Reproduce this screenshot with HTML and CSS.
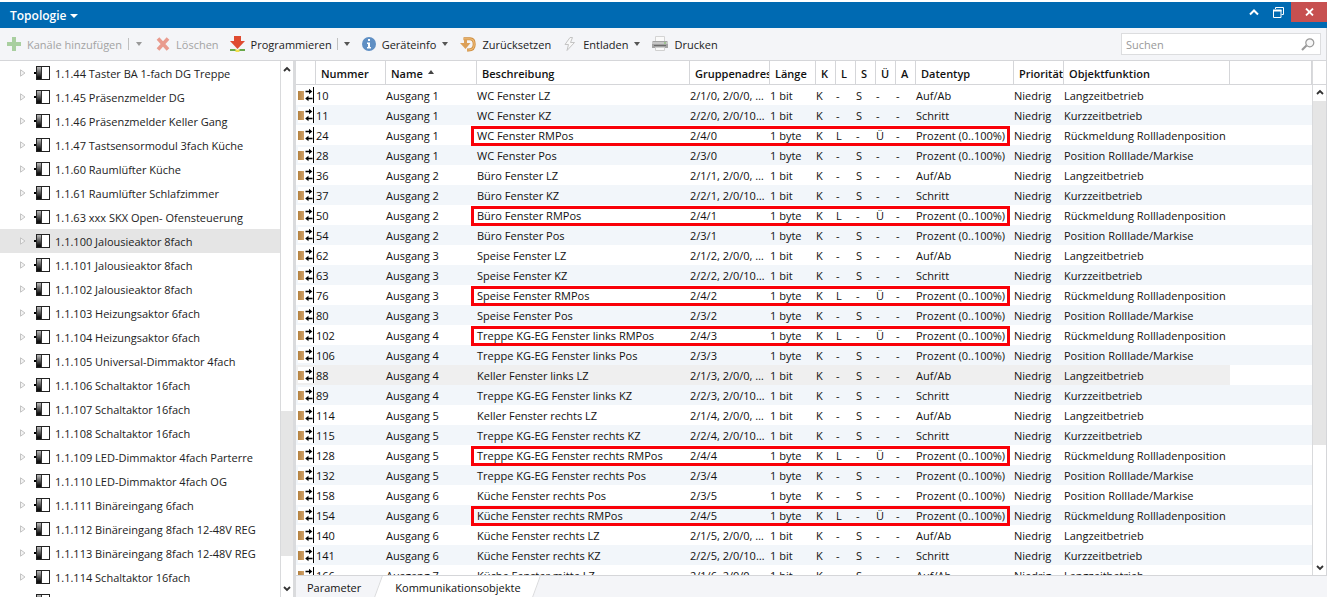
FILE: index.html
```html
<!DOCTYPE html>
<html lang="de">
<head>
<meta charset="utf-8">
<title>Topologie</title>
<link rel="stylesheet" href="styles.css">
</head>
<body>
<svg class="defs" aria-hidden="true">
  <defs>
    <linearGradient id="dev-fill" x1="0" y1="0" x2="0" y2="1"><stop offset="0" stop-color="#bbb"/><stop offset="0.85" stop-color="#111"/></linearGradient>
    <linearGradient id="obj-fill" x1="0" y1="0" x2="1" y2="0"><stop offset="0" stop-color="#b5823f"/><stop offset="1" stop-color="#cfa068"/></linearGradient>
    <symbol id="i-device" viewBox="0 0 17 16">
      <path d="M0 8h3" stroke="#000" stroke-width="2"/>
      <rect x="2.5" y="1.5" width="13" height="13" fill="#fff" stroke="#222"/>
      <rect x="3" y="2" width="4" height="12" fill="url(#dev-fill)"/>
      <path d="M7.5 2v12" stroke="#333"/>
    </symbol>
    <symbol id="i-object" viewBox="0 0 17 16">
      <rect width="17" height="16" fill="#fff"/>
      <rect x="0" y="4" width="6" height="9" fill="url(#obj-fill)"/>
      <path d="M7.500 4.500h5M9.500 11.500h5" stroke="#000" stroke-width="1.400"/>
      <path d="M11 1.700L14.300 4.500L11 7.300zM10.500 8.700L7.200 11.500L10.500 14.300z" fill="#000"/>
      <path d="M15.500 0v16" stroke="#000"/>
    </symbol>
    <symbol id="i-up" viewBox="0 0 8 6"><path d="M1 5L4 2L7 5" fill="none" stroke="#333" stroke-width="1.800"/></symbol>
    <symbol id="i-down" viewBox="0 0 8 6"><path d="M1 1L4 4L7 1" fill="none" stroke="#333" stroke-width="1.800"/></symbol>
  </defs>
</svg>

<header class="titlebar">
  <button class="title">Topologie<i class="caret"></i></button>
  <div class="window-buttons">
    <button aria-label="Einklappen"><svg width="10" height="8" viewBox="0 0 10 8"><path d="M1 6.500L5 2.500L9 6.500" fill="none" stroke="#fff" stroke-width="2"/></svg></button>
    <button aria-label="Wiederherstellen"><svg width="11" height="11" viewBox="0 0 11 11"><path d="M2.500 2V.500H10.500v7H8.500M.500 3v7.500h7.500V3" fill="none" stroke="#fff"/><path d="M0 3.500h8.500" stroke="#fff" stroke-width="2"/></svg></button>
    <button class="close" aria-label="Schließen"><svg width="9" height="8" viewBox="0 0 9 8"><path d="M1 0.500L8 7.500M8 .500L1 7.500" stroke="#fff" stroke-width="1.800"/></svg></button>
  </div>
</header>

<div class="toolbar">
  <button class="tool add" disabled><svg width="14" height="14" viewBox="0 0 14 14"><path d="M5 0h4v5h5v4H9v5H5V9H0V5h5z" fill="#a9cfa0"/></svg><span>Kanäle hinzufügen</span></button>
  <button class="drop" disabled aria-label="Weitere Kanaloptionen"><i class="caret"></i></button>
  <button class="tool delete" disabled><svg width="14" height="14" viewBox="0 0 14 14"><path d="M2 1.500L12 12.500M12 1.500L2 12.500" stroke="#e99b8e" stroke-width="3.600"/></svg><span>Löschen</span></button>
  <button class="tool program"><svg width="15" height="16" viewBox="0 0 15 16"><path d="M4 0h7v5h4L7.500 13L0 5h4z" fill="#df4b31"/><path d="M0 13h5l2.500 1.500L10 13h5v2H0z" fill="#68a84a"/><path d="M5.500 13L7.500 14L9.500 13v3h-4z" fill="#f2df4c"/></svg><span>Programmieren</span></button>
  <button class="drop" aria-label="Programmieroptionen"><i class="caret"></i></button>
  <button class="tool info"><svg width="14" height="14" viewBox="0 0 14 14"><circle cx="7" cy="7" r="7" fill="#5f8fc4"/><path d="M6 2h2v2H6zM5 5.500h3V10h1v1.500H5V10h1V7H5z" fill="#fff"/></svg><span>Geräteinfo</span><i class="caret"></i></button>
  <button class="tool reset"><svg width="16" height="15" viewBox="0 0 16 15"><path d="M3.500 1.800H10Q14.200 2 14.200 7.200Q14.200 13 8.500 13H7" fill="none" stroke="#cf8d3e" stroke-width="3"/><path d="M3.500 1.800H10Q14.200 2 14.200 7.200Q14.200 13 8.500 13H7" fill="none" stroke="#eebc79" stroke-width="1.200"/><path d="M5.500 3v3" stroke="#dca059" stroke-width="3"/><path d="M0 6h10.500L5.500 12z" fill="#dca059"/></svg><span>Zurücksetzen</span></button>
  <button class="tool unload"><svg width="12" height="15" viewBox="0 0 12 15"><path d="M6 .500L1 7.500H4.500L3 13.500L10.500 5.500H6.500L8.500 .500z" fill="#f8f8f8" stroke="#c4c4c4"/></svg><span>Entladen</span><i class="caret"></i></button>
  <button class="tool print"><svg width="16" height="16" viewBox="0 0 16 16"><path d="M3.500 5V.500h9V5" fill="#fafafa" stroke="#d4d4d4"/><path d="M1 5h14l1 1v6H0V6z" fill="#a3a3a3"/><path d="M0 6h16v2H0z" fill="#c6c6c6"/><path d="M2 9h12v1H2z" fill="#6b6b6b"/><path d="M12 6.500h2v1h-2z" fill="#76bd5c"/><path d="M3.500 11.500h9v3h-9z" fill="#fafafa" stroke="#d0d0d0"/></svg><span>Drucken</span></button>
  <label class="search"><input type="text" placeholder="Suchen" aria-label="Suchen"><svg width="14" height="13" viewBox="0 0 14 13"><path d="M1 12L5.500 7.500" stroke="#999" stroke-width="2.200"/><circle cx="8.800" cy="4.800" r="4" fill="#f7f7f7" stroke="#999" stroke-width="1.200"/></svg></label>
</div>

<main class="workspace">
  <nav class="tree-pane">
    <ul class="tree" id="tree"></ul>
    <div class="scroll tree-scroll">
      <svg width="8" height="6"><use href="#i-up"/></svg>
      <div class="track"><i class="before"></i><i class="thumb"></i><i class="after"></i></div>
      <svg width="8" height="6"><use href="#i-down"/></svg>
    </div>
  </nav>
  <section class="content">
    <div class="grid-area">
      <div class="grid">
        <table>
          <colgroup><col class="c-icon"><col class="c-num"><col class="c-name"><col class="c-desc"><col class="c-group"><col class="c-len"><col class="c-flag"><col class="c-flag"><col class="c-flag"><col class="c-flag"><col class="c-flag"><col class="c-type"><col class="c-prio"><col class="c-func"><col></colgroup>
          <thead><tr><th></th><th>Nummer</th><th>Name<i class="sort"></i></th><th>Beschreibung</th><th>Gruppenadressen</th><th>Länge</th><th>K</th><th>L</th><th>S</th><th>Ü</th><th>A</th><th>Datentyp</th><th>Priorität</th><th>Objektfunktion</th><th></th></tr></thead>
          <tbody id="objects"></tbody>
        </table>
      </div>
      <div class="grid-side">
        <div class="corner"></div>
        <div class="scroll grid-scroll">
          <svg width="8" height="6"><use href="#i-up"/></svg>
          <div class="track"><i class="thumb"></i><i class="after"></i></div>
          <svg width="8" height="6"><use href="#i-down"/></svg>
        </div>
      </div>
    </div>
    <div class="tabs"><button class="tab">Parameter</button><button class="tab active">Kommunikationsobjekte</button></div>
  </section>
</main>
<script src="app.js"></script>
</body>
</html>
```

FILE: styles.css
```css
* { box-sizing: border-box; }
body {
  margin: 0;
  padding-top: 2px;
  height: 100vh;
  display: flex;
  flex-direction: column;
  overflow: hidden;
  background: #fff;
  color: #1e1e1e;
  font: 11px/18px "Open Sans", "Noto Sans", sans-serif;
}
button {
  border: 0;
  padding: 0;
  background: none;
  color: inherit;
  font: inherit;
  display: flex;
  align-items: center;
  white-space: nowrap;
}
svg { flex: none; display: block; }
.defs { position: absolute; width: 0; height: 0; }
.caret {
  border: 3px solid transparent;
  border-top: 4px solid #555;
  border-bottom: 0;
}

.titlebar {
  flex: none;
  height: 26px;
  display: flex;
  justify-content: space-between;
  background: #006ab2;
  color: #fff;
}
.title { padding: 2px 0 0 10px; gap: 4px; font-size: 12px; font-weight: 600; }
.title .caret { border-width: 4px 4px 0; border-top-color: #fff; }
.window-buttons { display: flex; height: 20px; }
.window-buttons button { width: 25px; justify-content: center; }
.window-buttons .close { width: 36px; background: #c75050; }

.toolbar {
  flex: none;
  height: 33px;
  display: flex;
  align-items: center;
  padding: 0 5px 0 7px;
  background: #f4f5f8;
  border-bottom: 1px solid #d5d6d9;
  border-right: 1px solid #d5d6d9;
}
.tool { gap: 6px; color: #222; }
.tool span { padding-top: 1px; }
.tool:disabled { color: #a3a3a3; }
.drop { height: 12px; margin-left: 6px; padding-left: 7px; border-left: 1px solid #c0c0c0; }
.program + .drop { margin-left: 5px; padding-left: 6px; }
.drop:disabled .caret { border-top-color: #999; }
.delete { margin-left: 14px; }
.program { margin-left: 11px; }
.info, .reset { margin-left: 12px; }
.unload { margin-left: 13px; gap: 7px; }
.print { margin-left: 12px; }
.unload .caret { margin-left: -1px; }
.search {
  margin-left: auto;
  width: 200px;
  height: 22px;
  padding: 0 5px 0 4px;
  display: flex;
  align-items: center;
  border: 1px solid #dcdddf;
  background: #fff;
}
.search input {
  flex: 1;
  min-width: 0;
  padding: 1px 0 0;
  border: 0;
  outline: 0;
  font: inherit;
}
.search input::placeholder { color: #999; opacity: 1; }

.workspace { flex: 1; min-height: 0; display: flex; }
.tree-pane { flex: none; width: 296px; display: flex; border-right: 3px solid #dadbdd; }
.tree { flex: 1; min-width: 0; margin: 0; padding: 0; list-style: none; overflow: hidden; }
.tree li {
  height: 24px;
  padding-left: 20px;
  display: flex;
  align-items: center;
  white-space: nowrap;
  color: #222;
}
.tree span { padding-top: 2px; }
.tree .selected { background: #e5e5e5; }
.tree .device { margin: 0 4px 0 8px; }

.scroll {
  display: flex;
  flex-direction: column;
  align-items: center;
  background: #fff;
  border-left: 1px solid #d9dadc;
}
.track { flex: 1; align-self: stretch; display: flex; flex-direction: column; }
.thumb { background: #e5e5e5; }
.tree-scroll { width: 13px; padding: 5px 0; }
.tree-scroll .track { margin: 5px 0; }
.tree-scroll .before { flex: 334; }
.tree-scroll .thumb { flex: 145; }
.tree-scroll .after { flex: 25; }

.content { flex: 1; min-width: 0; display: flex; flex-direction: column; }
.grid-area { flex: 1; min-height: 0; display: flex; border-bottom: 1px solid #d5d6d9; }
.grid { flex: 1; min-width: 0; overflow: hidden; }
.grid-side { width: 15px; display: flex; flex-direction: column; border-right: 1px solid #d5d6d9; }
.corner { height: 24px; border-left: 1px solid #d9dadc; border-bottom: 1px solid #d5d6d9; }
.grid-scroll { flex: 1; padding: 4px 0; }
.grid-scroll .track { margin: 6px 0; }
.grid-scroll .thumb { flex: 344; }
.grid-scroll .after { flex: 114; }

table { width: 100%; table-layout: fixed; border-collapse: separate; border-spacing: 0; color: #111; }
.c-icon, .c-flag { width: 20px; }
.c-num { width: 70px; }
.c-name { width: 91px; }
.c-desc { width: 213px; }
.c-group { width: 80px; }
.c-len { width: 46px; }
.c-type { width: 98px; }
.c-prio { width: 50px; }
.c-func { width: 166px; }
th {
  height: 24px;
  padding: 2px 0 0 5px;
  border-right: 1px solid #d5d6d9;
  border-bottom: 1px solid #d5d6d9;
  text-align: left;
  font-weight: 600;
  white-space: nowrap;
  overflow: hidden;
}
.sort {
  display: inline-block;
  margin-left: 5px;
  vertical-align: 4px;
  border: 3px solid transparent;
  border-top: 0;
  border-bottom: 4px solid #444;
}
td { height: 20px; padding: 2px 0 0; white-space: nowrap; }
td:first-child { padding: 0 0 0 2px; }
.text { display: block; overflow: hidden; text-overflow: ellipsis; }
.group .text { margin-right: 4px; }
tbody tr { position: relative; }
tbody tr:nth-child(even) { background: #f2f6fa; }
tbody .current td:not(:last-child) { background: #efefef; }
.frame {
  position: absolute;
  z-index: 1;
  top: 1px;
  left: 175px;
  width: 539px;
  height: 20px;
  border: 3px solid #f90008;
}

.tabs { flex: none; height: 21px; display: flex; background: #f4f5f8; overflow: hidden; }
.tab { position: relative; padding: 2px 17px 0 11px; color: #111; z-index: 1; }
.active { padding: 2px 17px 0; }
.active::before {
  content: "";
  position: absolute;
  z-index: -1;
  top: 0;
  bottom: 0;
  left: 0;
  right: 0;
  transform: skewX(-20deg);
  background: #fff;
  border: 1px solid #d9dadc;
  border-width: 0 1px;
}
```

FILE: app.js
```js
const devices = [
  "1.1.44 Taster BA 1-fach DG Treppe", "1.1.45 Präsenzmelder DG", "1.1.46 Präsenzmelder Keller Gang",
  "1.1.47 Tastsensormodul 3fach Küche", "1.1.60 Raumlüfter Küche", "1.1.61 Raumlüfter Schlafzimmer",
  "1.1.63 xxx SKX Open- Ofensteuerung", "1.1.100 Jalousieaktor 8fach", "1.1.101 Jalousieaktor 8fach",
  "1.1.102 Jalousieaktor 8fach", "1.1.103 Heizungsaktor 6fach", "1.1.104 Heizungsaktor 6fach",
  "1.1.105 Universal-Dimmaktor 4fach", "1.1.106 Schaltaktor 16fach", "1.1.107 Schaltaktor 16fach",
  "1.1.108 Schaltaktor 16fach", "1.1.109 LED-Dimmaktor 4fach Parterre", "1.1.110 LED-Dimmaktor 4fach OG",
  "1.1.111 Binäreingang 6fach", "1.1.112 Binäreingang 8fach 12-48V REG", "1.1.113 Binäreingang 8fach 12-48V REG",
  "1.1.114 Schaltaktor 16fach", ""
];

// Length, flags K L S Ü A, data type, object function
const kinds = {
  LZ: ["1 bit", "K-S--", "Auf/Ab", "Langzeitbetrieb"],
  KZ: ["1 bit", "K-S--", "Schritt", "Kurzzeitbetrieb"],
  RMPos: ["1 byte", "KL-Ü-", "Prozent (0..100%)", "Rückmeldung Rollladenposition"],
  Pos: ["1 byte", "K-S--", "Prozent (0..100%)", "Position Rolllade/Markise"]
};

// Number, channel, description, kind, group addresses
const objects = [
  [10, 1, "WC Fenster", "LZ", "2/1/0, 2/0/0, 2/0/2"],
  [11, 1, "WC Fenster", "KZ", "2/2/0, 2/0/10, 2/0/12"],
  [24, 1, "WC Fenster", "RMPos", "2/4/0"],
  [28, 1, "WC Fenster", "Pos", "2/3/0"],
  [36, 2, "Büro Fenster", "LZ", "2/1/1, 2/0/0, 2/0/2"],
  [37, 2, "Büro Fenster", "KZ", "2/2/1, 2/0/10, 2/0/12"],
  [50, 2, "Büro Fenster", "RMPos", "2/4/1"],
  [54, 2, "Büro Fenster", "Pos", "2/3/1"],
  [62, 3, "Speise Fenster", "LZ", "2/1/2, 2/0/0, 2/0/2"],
  [63, 3, "Speise Fenster", "KZ", "2/2/2, 2/0/10, 2/0/12"],
  [76, 3, "Speise Fenster", "RMPos", "2/4/2"],
  [80, 3, "Speise Fenster", "Pos", "2/3/2"],
  [102, 4, "Treppe KG-EG Fenster links", "RMPos", "2/4/3"],
  [106, 4, "Treppe KG-EG Fenster links", "Pos", "2/3/3"],
  [88, 4, "Keller Fenster links", "LZ", "2/1/3, 2/0/0, 2/0/2"],
  [89, 4, "Treppe KG-EG Fenster links", "KZ", "2/2/3, 2/0/10, 2/0/12"],
  [114, 5, "Keller Fenster rechts", "LZ", "2/1/4, 2/0/0, 2/0/2"],
  [115, 5, "Treppe KG-EG Fenster rechts", "KZ", "2/2/4, 2/0/10, 2/0/12"],
  [128, 5, "Treppe KG-EG Fenster rechts", "RMPos", "2/4/4"],
  [132, 5, "Treppe KG-EG Fenster rechts", "Pos", "2/3/4"],
  [158, 6, "Küche Fenster rechts", "Pos", "2/3/5"],
  [154, 6, "Küche Fenster rechts", "RMPos", "2/4/5"],
  [140, 6, "Küche Fenster rechts", "LZ", "2/1/5, 2/0/0, 2/0/2"],
  [141, 6, "Küche Fenster rechts", "KZ", "2/2/5, 2/0/10, 2/0/12"],
  [166, 7, "Küche Fenster mitte", "LZ", "2/1/6, 2/0/0, 2/0/2"]
];

document.getElementById("tree").innerHTML = devices.map(name => `
  <li class="${name.startsWith("1.1.100 ") ? "selected" : ""}">
    <svg width="6" height="8" viewBox="0 0 6 8"><path d="M.5 .8L5 4L.5 7.200z" fill="#f4f4f4" stroke="#c4c4c4"/></svg>
    <svg class="device" width="17" height="16"><use href="#i-device"/></svg><span>${name}</span>
  </li>`).join("");

document.getElementById("objects").innerHTML = objects.map(([num, channel, place, kind, groups]) => {
  const [length, flags, type, func] = kinds[kind];
  const frame = kind === "RMPos" ? '<div class="frame"></div>' : "";
  const cells = [...flags].map(flag => `<td>${flag}</td>`).join("");
  return `<tr class="${num === 88 ? "current" : ""}">
    <td><svg width="17" height="16"><use href="#i-object"/></svg>${frame}</td>
    <td>${num}</td><td>Ausgang ${channel}</td><td>${place} ${kind}</td>
    <td class="group"><span class="text">${groups}</span></td><td>${length}</td>${cells}
    <td>${type}</td><td>Niedrig</td><td>${func}</td><td></td></tr>`;
}).join("");
```
